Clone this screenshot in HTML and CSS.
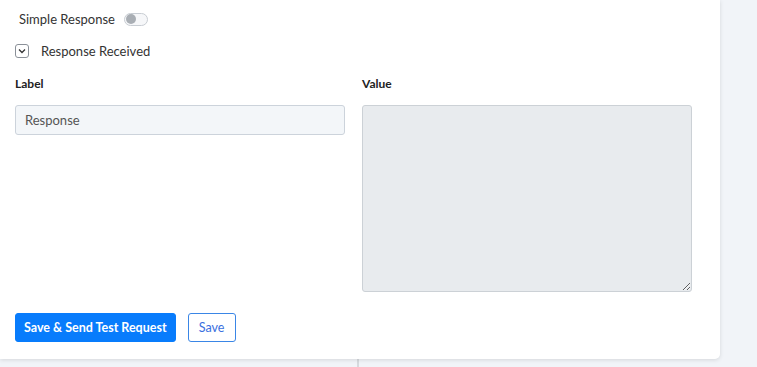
FILE: index.html
```html
<!DOCTYPE html>
<html>
<head>
    <meta charset='utf-8'>
    <title>Response</title>
    <link rel="stylesheet" href="styles.css">
</head>
<body>
    <div class="page">
        <div class="card">
            <div class="row simple">
                <span>Simple Response</span>
                <span class="toggle"><span class="knob"></span></span>
            </div>
            <div class="row received">
                <span class="chevron">
                    <svg width="8" height="6" viewBox="0 0 8 6"><path d="M1 1.5 L4 4.5 L7 1.5" fill="none" stroke="#333" stroke-width="1.3"/></svg>
                </span>
                <span>Response Received</span>
            </div>
            <div class="fields">
                <div class="field">
                    <label>Label</label>
                    <input class="input" type="text" value="Response">
                </div>
                <div class="field">
                    <label>Value</label>
                    <textarea class="textarea"></textarea>
                </div>
            </div>
            <div class="actions">
                <button class="btn btn-primary">Save &amp; Send Test Request</button>
                <button class="btn btn-outline">Save</button>
            </div>
        </div>
        <div class="below">
            <div class="below-left"></div>
        </div>
    </div>
</body>
</html>
```

FILE: styles.css
```css
* {
    margin: 0;
    padding: 0;
    box-sizing: border-box;
}

body {
    font-family: Lato, "Open Sans", sans-serif;
    font-size: 13px;
    color: #333;
    background: #f1f4f8;
}

.card {
    width: 720px;
    height: 359px;
    background: #fff;
    border-radius: 0 0 5px 0;
    box-shadow: 0 1px 4px rgba(0, 0, 0, 0.12);
    padding: 0 0 0 15px;
    position: relative;
}

.row {
    display: flex;
    align-items: center;
}

.simple {
    height: 38px;
    padding-left: 4px;
    gap: 9px;
}

.toggle {
    width: 24px;
    height: 13px;
    border: 1px solid #c8cdd3;
    border-radius: 7px;
    background: #f6f7f9;
    display: flex;
    align-items: center;
    padding-left: 1px;
}

.knob {
    width: 10px;
    height: 10px;
    border-radius: 50%;
    background: #a9aeb4;
}

.received {
    height: 26px;
    gap: 12px;
}

.chevron {
    width: 14px;
    height: 14px;
    border: 1px solid #8a9098;
    border-radius: 3px;
    display: flex;
    align-items: center;
    justify-content: center;
}

.fields {
    display: flex;
    gap: 17px;
    margin-top: 12px;
}

.field {
    width: 330px;
    display: flex;
    flex-direction: column;
}

.field label {
    font-weight: bold;
    font-size: 12px;
    color: #222;
    height: 29px;
    line-height: 16px;
}

.input {
    height: 30px;
    background: #f3f6f9;
    border: 1px solid #ccd3db;
    border-radius: 3px;
    padding: 0 9px;
    font-family: Lato, "Open Sans", sans-serif;
    font-size: 13px;
    color: #555;
}

.textarea {
    height: 187px;
    background: #e8ebee;
    border: 1px solid #ccd1d6;
    border-radius: 3px;
    resize: vertical;
}

.actions {
    display: flex;
    gap: 12px;
    position: absolute;
    left: 15px;
    top: 313px;
}

.btn {
    height: 29px;
    border-radius: 3px;
    font-family: Lato, "Open Sans", sans-serif;
    font-size: 12.5px;
    padding: 0 8px;
    cursor: pointer;
}

.btn-primary {
    background: #087cfc;
    border: 1px solid #087cfc;
    color: #fff;
    font-weight: bold;
}

.btn-outline {
    width: 48px;
    background: #fff;
    border: 1px solid #3a86e6;
    color: #3a6fe0;
}

.below {
    height: 8px;
}

.below-left {
    width: 359px;
    height: 100%;
    border-right: 2px solid #d6dade;
}
```
